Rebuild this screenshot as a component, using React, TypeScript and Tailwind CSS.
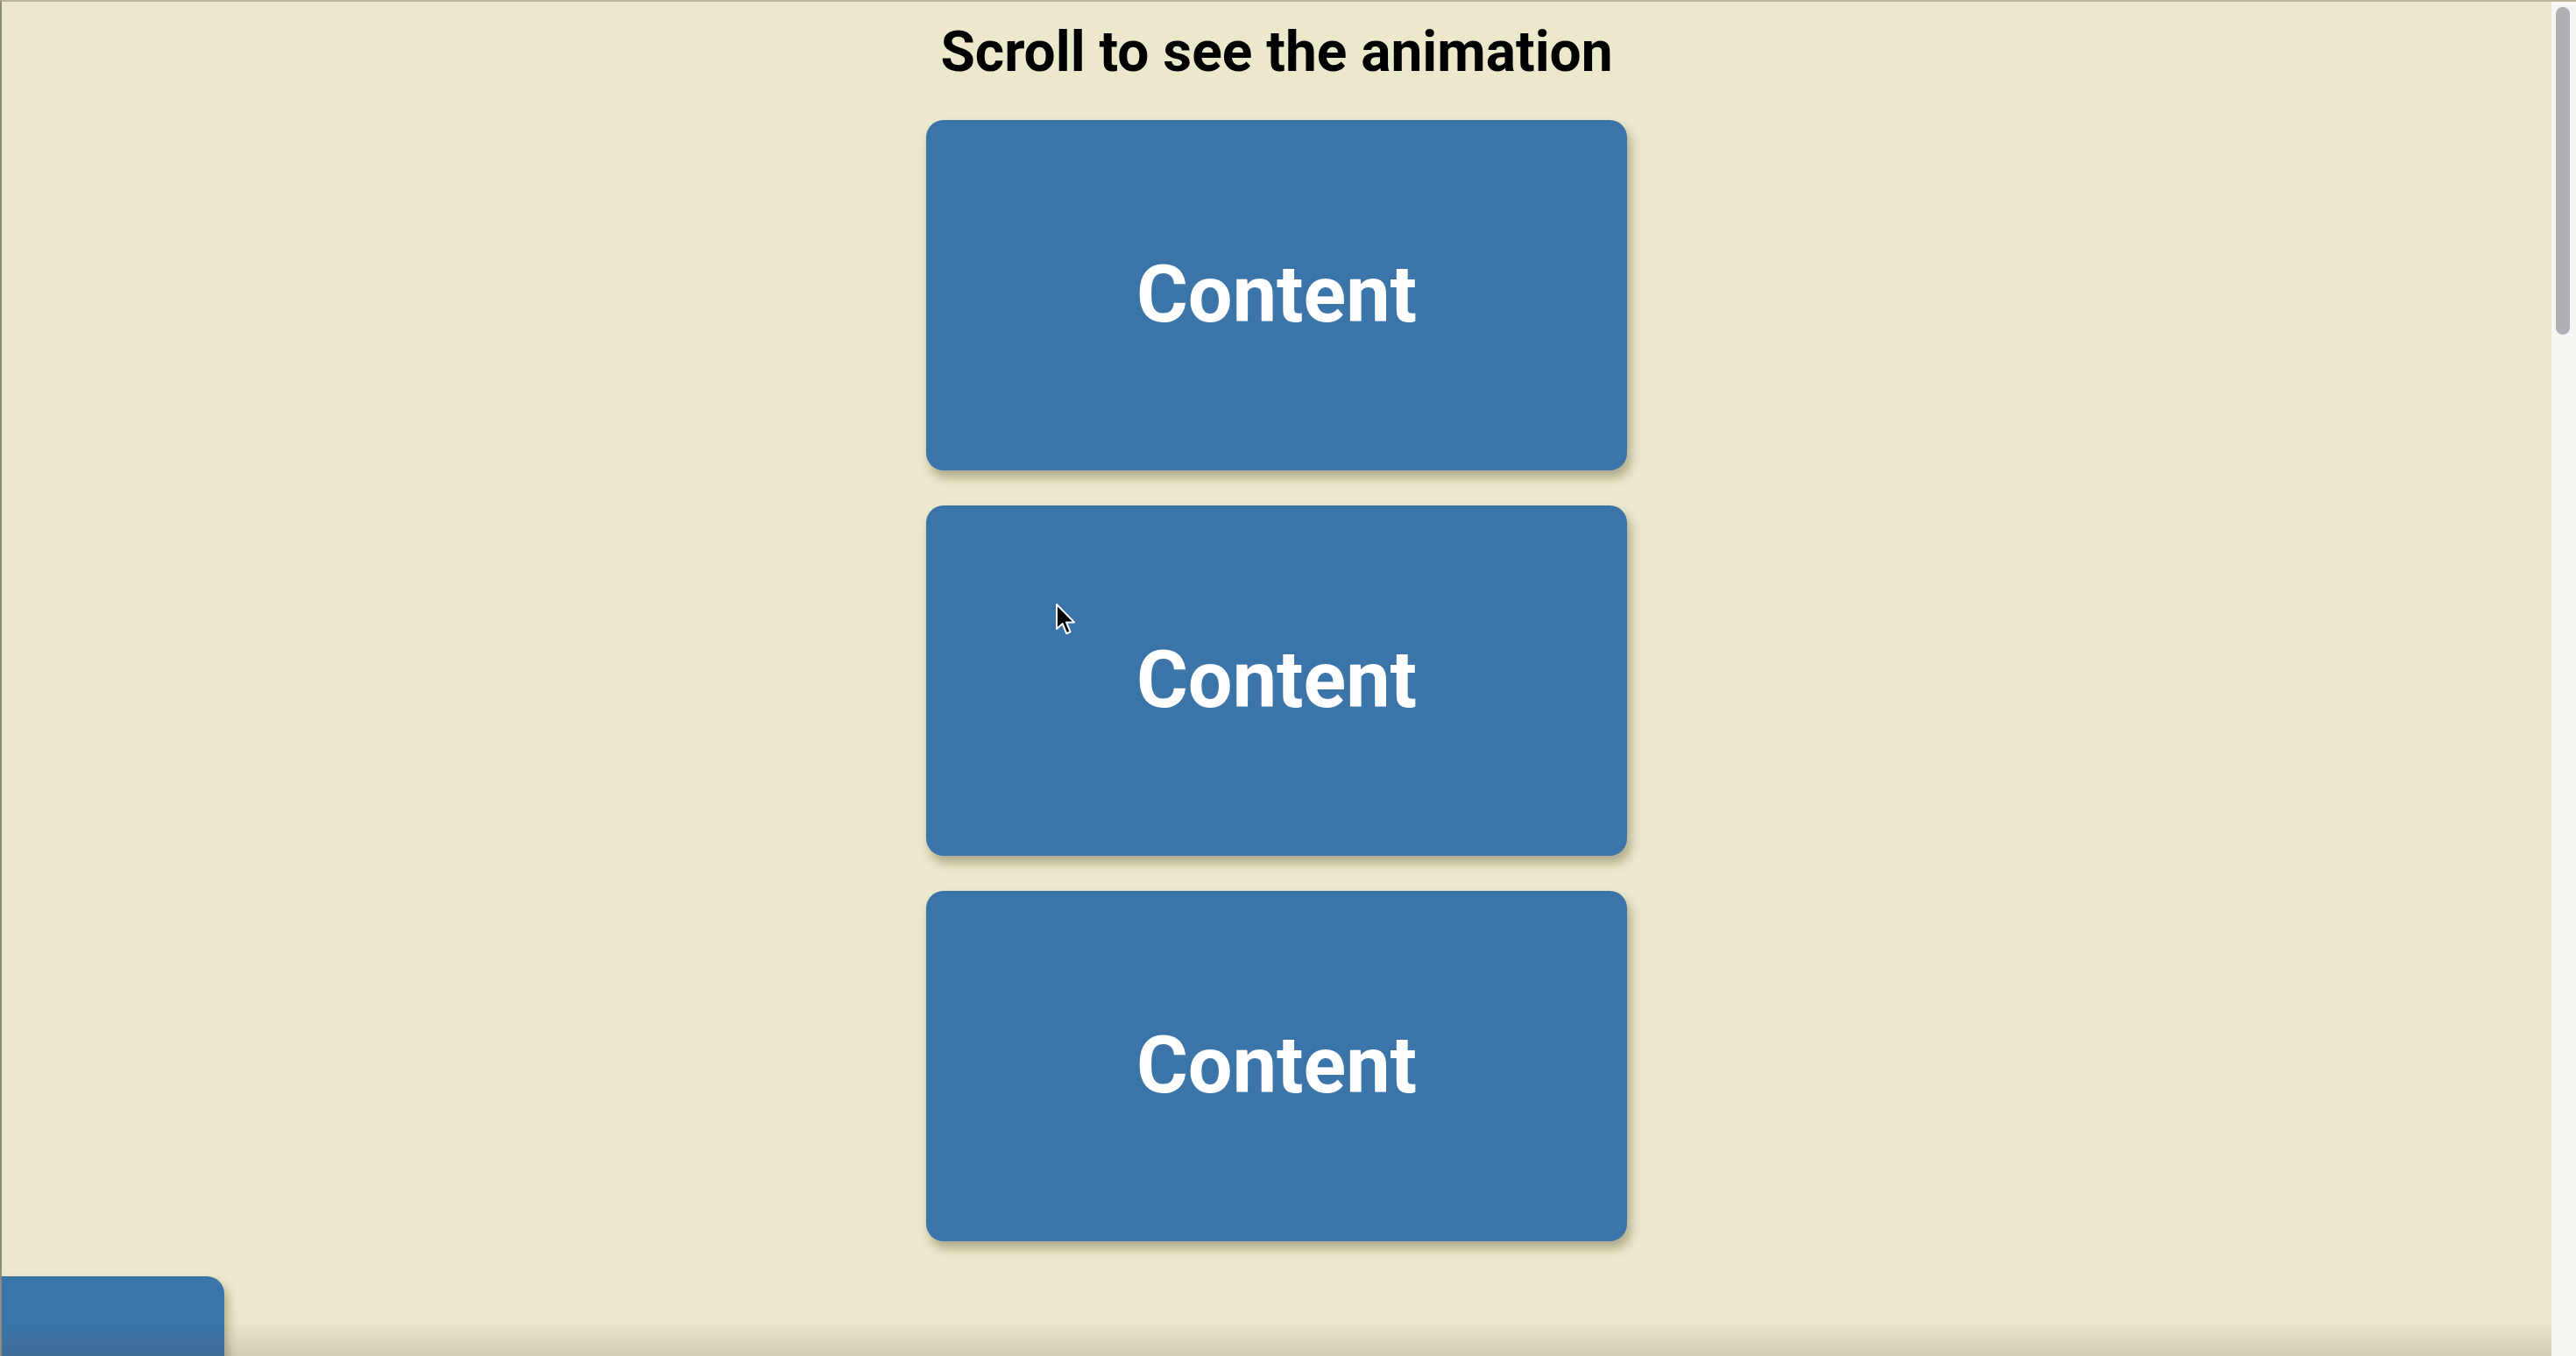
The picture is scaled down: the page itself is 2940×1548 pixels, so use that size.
const cards = [0, 1, 2];

function Cursor() {
  return (
    <svg
      className="absolute left-[1202px] top-[686px]"
      width="24"
      height="38"
      viewBox="0 0 12 19"
    >
      <path
        d="M1 1 L1 15 L4.3 12 L6.6 17.6 L8.8 16.7 L6.5 11.2 L11 11.2 Z"
        fill="#000"
        stroke="#fff"
        strokeWidth="1"
        strokeLinejoin="round"
      />
    </svg>
  );
}

function Card({
  className = '',
  label = 'Content',
}: {
  className?: string;
  label?: string;
}) {
  return (
    <div
      className={`flex h-[400px] w-[800px] shrink-0 items-center justify-center rounded-[20px] bg-[#3a74a9] shadow-[4px_8px_12px_rgba(60,55,20,0.35)] ${className}`}
    >
      {label && (
        <span className="text-[90px] font-bold leading-none text-white">
          {label}
        </span>
      )}
    </div>
  );
}

export default function App() {
  return (
    <div
      className="relative flex h-[1548px] w-[2940px] overflow-hidden border-l-2 border-t-2 border-l-[#8c8b80] border-t-[#b9b49a] bg-[#ebe8cb]"
      style={{ fontFamily: 'Roboto, "Liberation Sans", sans-serif' }}
    >
      <main className="flex flex-1 flex-col items-center">
        <h1 className="pt-[20px] text-[64px] font-bold leading-[75px] text-black">
          Scroll to see the animation
        </h1>
        <div className="mt-[40px] flex flex-col items-center gap-[40px]">
          {cards.map((c) => (
            <Card key={c} />
          ))}
          {/* still sliding in from the left, its label is out of view */}
          <Card className="translate-x-[-1601px]" label="" />
        </div>
      </main>

      <div className="w-[28px] shrink-0 bg-[#f6f5f2] pl-[5px] pt-[6px]">
        <div className="h-[374px] w-[16px] rounded-full bg-[#b1afb5]" />
      </div>

      <div className="pointer-events-none absolute bottom-0 left-0 right-[28px] h-[40px] bg-gradient-to-t from-[rgba(90,85,70,0.18)] to-transparent" />
      <Cursor />
    </div>
  );
}
